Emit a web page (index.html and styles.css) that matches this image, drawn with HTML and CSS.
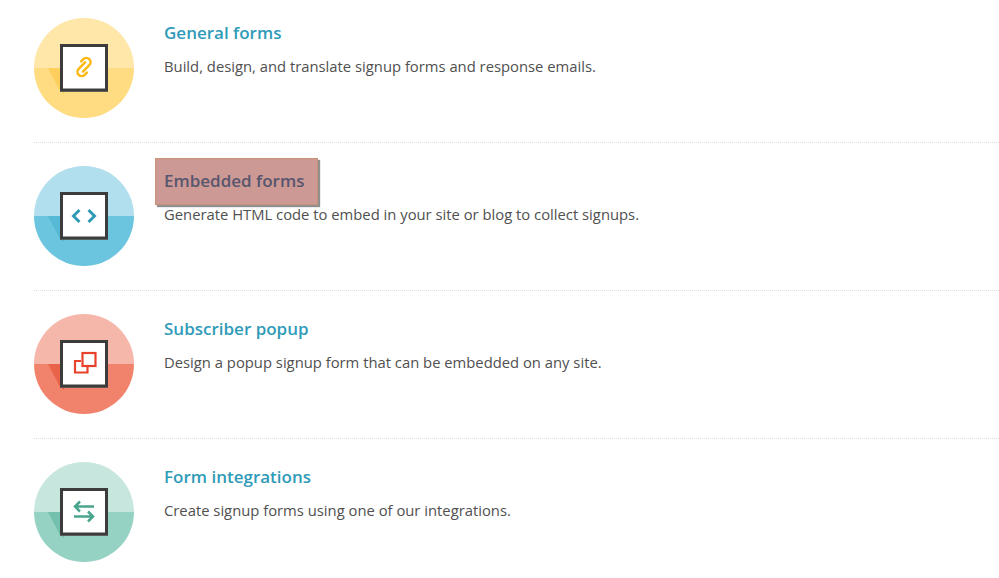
FILE: index.html
```html
<!DOCTYPE html>
<html lang="en">
<head>
    <meta charset="UTF-8">
    <title>Signup forms</title>
    <link rel="stylesheet" href="styles.css">
</head>
<body>
    <svg class="defs">
        <defs>
            <g id="badge-box">
                <rect x="26" y="26" width="48" height="48" fill="#6f6f6f" opacity="0.8"/>
                <rect x="27.5" y="27.5" width="45" height="44.5" fill="#fff" stroke="#3c3c3c" stroke-width="3"/>
            </g>
        </defs>
    </svg>

    <ul class="form-list">
        <li class="form-row">
            <svg class="badge" width="100" height="100" viewBox="0 0 100 100">
                <rect width="100" height="50" fill="#ffe6a9"/>
                <rect y="50" width="100" height="50" fill="#ffdc82"/>
                <polygon points="14,50 30,50 30,76 26,73" fill="#ffcf5e"/>
                <use href="#badge-box"/>
                <g fill="none" stroke="#fdb913" stroke-width="2.5" stroke-linecap="round" transform="rotate(-45 50 49)">
                    <path d="M54 46.500H45a4.250 4.250 0 0 0 0 8.500H48"/>
                    <path d="M46 51.500H55a4.250 4.250 0 0 0 0-8.500H52"/>
                </g>
            </svg>
            <div class="form-text">
                <h3 class="form-title">General forms</h3>
                <p class="form-desc">Build, design, and translate signup forms and response emails.</p>
            </div>
        </li>
        <li class="form-row">
            <svg class="badge" width="100" height="100" viewBox="0 0 100 100">
                <rect width="100" height="50" fill="#b1dfee"/>
                <rect y="50" width="100" height="50" fill="#6cc5de"/>
                <polygon points="14,50 30,50 30,76 26,73" fill="#56b9d5"/>
                <use href="#badge-box"/>
                <g fill="none" stroke="#2f9bb8" stroke-width="3">
                    <path d="M45.500 44l-6 6 6 6"/>
                    <path d="M54.500 44l6 6-6 6"/>
                </g>
            </svg>
            <div class="form-text">
                <h3 class="form-title is-marked">Embedded forms</h3>
                <p class="form-desc">Generate HTML code to embed in your site or blog to collect signups.</p>
            </div>
        </li>
        <li class="form-row">
            <svg class="badge" width="100" height="100" viewBox="0 0 100 100">
                <rect width="100" height="50" fill="#f6b7ab"/>
                <rect y="50" width="100" height="50" fill="#f1836d"/>
                <polygon points="14,50 30,50 30,76 26,73" fill="#e9634a"/>
                <use href="#badge-box"/>
                <g fill="none" stroke="#e8432a" stroke-width="2.2">
                    <rect x="48.500" y="39" width="13" height="13"/>
                    <path d="M47 47H41V58.500H53.500V53"/>
                </g>
            </svg>
            <div class="form-text">
                <h3 class="form-title">Subscriber popup</h3>
                <p class="form-desc">Design a popup signup form that can be embedded on any site.</p>
            </div>
        </li>
        <li class="form-row">
            <svg class="badge" width="100" height="100" viewBox="0 0 100 100">
                <rect width="100" height="50" fill="#c6e6de"/>
                <rect y="50" width="100" height="50" fill="#96d2c3"/>
                <polygon points="14,50 30,50 30,76 26,73" fill="#72c0ad"/>
                <use href="#badge-box"/>
                <g fill="none" stroke="#4aa58e" stroke-width="2.500">
                    <path d="M60 44.500H42M46 39.500L41 44.500l5 5"/>
                    <path d="M40 54.500h18M54 49.500L59 54.500l-5 5"/>
                </g>
            </svg>
            <div class="form-text">
                <h3 class="form-title">Form integrations</h3>
                <p class="form-desc">Create signup forms using one of our integrations.</p>
            </div>
        </li>
    </ul>
</body>
</html>
```

FILE: styles.css
```css
* {
    box-sizing: border-box;
    margin: 0;
    padding: 0;
}
html, body {
    height: 578px;
    overflow: hidden;
}
body {
    font-family: 'Open Sans', sans-serif;
    background-color: #fff;
    color: #505050;
}
.defs {
    display: none;
}
.form-list {
    list-style: none;
    padding-left: 34px;
}
.form-row {
    display: flex;
    gap: 30px;
    height: 148px;
    padding-top: 23px;
    border-bottom: 1px dotted #dcdcdc;
}
.form-row:first-child {
    height: 143px;
    padding-top: 18px;
}
.badge {
    flex-shrink: 0;
    border-radius: 50%;
}
.form-text {
    padding-top: 3px;
}
.form-title {
    position: relative;
    font-size: 17px;
    line-height: 24px;
    font-weight: 600;
    color: #2f9bb8;
    margin-bottom: 9px;
}
.form-title.is-marked {
    color: #2f88b8;
}
.form-title.is-marked::after {
    content: "";
    position: absolute;
    left: -9px;
    top: -11px;
    width: 161px;
    height: 45px;
    background-color: rgba(140, 22, 14, 0.44);
    border: 1px solid rgba(200, 140, 90, 0.5);
    box-shadow: 2px 2px 1px #8f8f8f;
}
.form-desc {
    font-size: 14.8px;
    line-height: 24px;
}
```
